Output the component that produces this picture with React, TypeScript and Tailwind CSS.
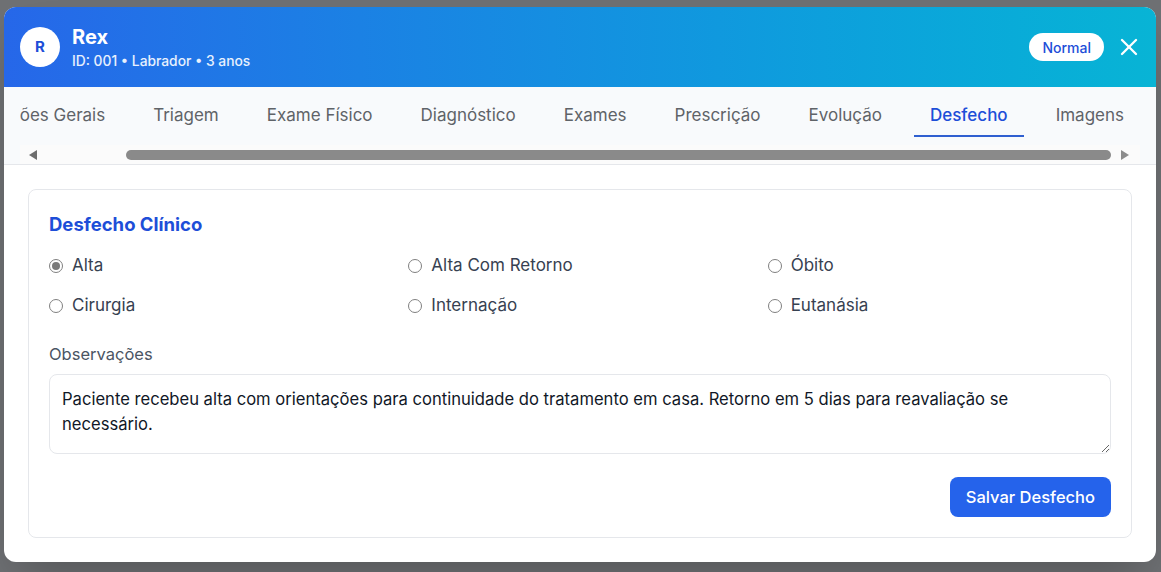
import { X } from "lucide-react";

const tabs = [
  "Informações Gerais",
  "Triagem",
  "Exame Físico",
  "Diagnóstico",
  "Exames",
  "Prescrição",
  "Evolução",
  "Desfecho",
  "Imagens",
];

const options = [
  { label: "Alta", checked: true },
  { label: "Alta Com Retorno" },
  { label: "Óbito" },
  { label: "Cirurgia" },
  { label: "Internação" },
  { label: "Eutanásia" },
];

const Radio = ({ label, checked }: { label: string; checked?: boolean }) => (
  <label className="flex items-center gap-[9px] h-6 text-[17px] text-[#374151]">
    <span className="w-[14px] h-[14px] rounded-full border border-[#808080] bg-white flex items-center justify-center shrink-0">
      {checked && <span className="w-[8px] h-[8px] rounded-full bg-[#7a7a7a]" />}
    </span>
    {label}
  </label>
);

const App = () => {
  return (
    <div
      className="h-[572px] w-[1161px] bg-[#6f7174] pt-[7px] pl-[4px] overflow-hidden"
      style={{ fontFamily: "Inter, 'Open Sans', sans-serif" }}
    >
      <div className="w-[1152px] h-[555px] bg-white rounded-xl overflow-hidden shadow-2xl flex flex-col">
        {/* Header */}
        <div className="h-[80px] shrink-0 bg-linear-to-r from-[#2667e9] to-[#08b4d5] pl-4 pr-[13px] flex items-center justify-between">
          <div className="flex items-center gap-3">
            <div className="w-10 h-10 rounded-full bg-white flex items-center justify-center text-[15px] font-bold text-[#1d4ed8]">
              R
            </div>
            <div className="text-white">
              <div className="text-xl leading-7 font-bold">Rex</div>
              <div className="text-[13.8px] leading-5 font-medium text-white/90">
                ID: 001 • Labrador • 3 anos
              </div>
            </div>
          </div>
          <div className="flex items-center gap-[11px]">
            <span className="bg-white text-[#1d4ed8] text-[14px] font-medium rounded-full px-[13px] h-7 flex items-center">
              Normal
            </span>
            <button type="button" className="text-white">
              <X size={28} strokeWidth={2} />
            </button>
          </div>
        </div>

        {/* Tabs */}
        <div className="bg-[#f8fafc] px-4 pt-2 border-b border-gray-200 shrink-0">
          <div className="flex justify-end gap-4 overflow-hidden">
            {tabs.map((t) => (
              <button
                key={t}
                type="button"
                className={
                  t === "Desfecho"
                    ? "shrink-0 whitespace-nowrap px-4 py-2 border-b-2 border-[#2f5fd0] text-[17px] leading-6 font-medium text-[#1d4ed8]"
                    : "shrink-0 whitespace-nowrap px-4 py-2 border-b-2 border-transparent text-[17px] leading-6 text-[#5f6368]"
                }
              >
                {t}
              </button>
            ))}
          </div>
          {/* scrollbar */}
          <div className="mt-2 h-[19px] bg-[#fbfbfb] flex items-center pl-[9px] pr-[11px]">
            <svg width="8" height="10" viewBox="0 0 8 10" className="shrink-0">
              <polygon points="8,0 8,10 0,5" fill="#6e6e6e" />
            </svg>
            <div className="flex-1 h-[10px] ml-[89px] mr-[10px] rounded-full bg-[#8a8a8a]" />
            <svg width="8" height="10" viewBox="0 0 8 10" className="shrink-0">
              <polygon points="0,0 0,10 8,5" fill="#8c8c8c" />
            </svg>
          </div>
        </div>

        {/* Content */}
        <div className="p-6 flex-1">
          <div className="border border-gray-200 rounded-lg p-5">
            <h2 className="text-[18.5px] leading-7 font-bold text-[#1d4ed8] mb-4">Desfecho Clínico</h2>
            <div className="grid grid-cols-3 gap-4 mb-6">
              {options.map((o) => (
                <Radio key={o.label} label={o.label} checked={o.checked} />
              ))}
            </div>
            <div className="text-[16.5px] leading-6 text-[#4b5563] mb-2">Observações</div>
            <textarea
              className="block w-full h-[80px] border border-gray-200 rounded-lg px-3 py-3 text-[16.6px] leading-[25px] text-[#111827] outline-none"
              defaultValue="Paciente recebeu alta com orientações para continuidade do tratamento em casa. Retorno em 5 dias para reavaliação se necessário."
            />
            <div className="flex justify-end mt-[23px]">
              <button
                type="button"
                className="bg-[#2563eb] text-white text-[16.5px] leading-6 font-medium px-4 py-2 rounded-lg"
              >
                Salvar Desfecho
              </button>
            </div>
          </div>
        </div>
      </div>
    </div>
  );
};

export default App;
